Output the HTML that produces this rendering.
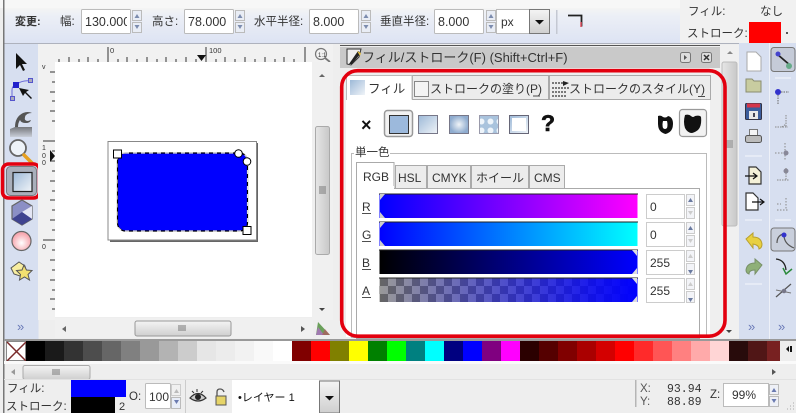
<!DOCTYPE html>
<html><head><meta charset="utf-8"><style>
html,body{margin:0;padding:0;background:#eee;width:796px;height:413px;overflow:hidden}
svg{display:block;filter:blur(.35px)}
text{font-family:"Liberation Sans","Noto Sans CJK JP",sans-serif;font-size:11.5px;fill:#333}
.m{font-family:"Liberation Mono",monospace;font-size:12px}
.in{fill:#fff;stroke:#bbb}
.u{stroke:#222;stroke-width:.8}
</style></head><body>
<svg width="796" height="413" viewBox="0 0 796 413" xmlns="http://www.w3.org/2000/svg">
<defs>
<linearGradient id="top" x1="0" y1="0" x2="0" y2="1"><stop offset="0" stop-color="#f4f4f4"/><stop offset=".2" stop-color="#eceff6"/><stop offset="1" stop-color="#dde3f3"/></linearGradient>
<linearGradient id="btn" x1="0" y1="0" x2="0" y2="1"><stop offset="0" stop-color="#f4f4f4"/><stop offset="1" stop-color="#cfcfcf"/></linearGradient>
<linearGradient id="th" x1="0" y1="0" x2="1" y2="0"><stop offset="0" stop-color="#e6e6e6"/><stop offset="1" stop-color="#c8c8c8"/></linearGradient>
<linearGradient id="sq" x1="0" y1="0" x2="1" y2="1"><stop offset="0" stop-color="#9db9d8"/><stop offset="1" stop-color="#f0f4f8"/></linearGradient>
<linearGradient id="wv" x1="0" y1="0" x2="0" y2="1"><stop offset="0" stop-color="#555"/><stop offset="1" stop-color="#c4c8d0"/></linearGradient>
<linearGradient id="rr" x1="0" y1="0" x2="1" y2="0"><stop offset="0" stop-color="#0000ff"/><stop offset="1" stop-color="#ff00ff"/></linearGradient>
<linearGradient id="gg" x1="0" y1="0" x2="1" y2="0"><stop offset="0" stop-color="#0000ff"/><stop offset="1" stop-color="#00ffff"/></linearGradient>
<linearGradient id="bb" x1="0" y1="0" x2="1" y2="0"><stop offset="0" stop-color="#000"/><stop offset="1" stop-color="#0000ff"/></linearGradient>
<linearGradient id="aa" x1="0" y1="0" x2="1" y2="0"><stop offset="0" stop-color="#0000ff" stop-opacity="0"/><stop offset="1" stop-color="#0000ff"/></linearGradient>
<radialGradient id="rad"><stop offset="0" stop-color="#f0f4f8"/><stop offset="1" stop-color="#8faccf"/></radialGradient>
<radialGradient id="ball" cx=".5" cy=".6"><stop offset="0" stop-color="#fff"/><stop offset="1" stop-color="#f7a8b0"/></radialGradient>
<pattern id="chk" width="16" height="16" patternUnits="userSpaceOnUse" x="380" y="278"><rect width="16" height="16" fill="#999"/><rect width="8" height="8" fill="#666"/><rect x="8" y="8" width="8" height="8" fill="#666"/></pattern>
<pattern id="dots" width="9" height="9" patternUnits="userSpaceOnUse"><rect width="9" height="9" fill="#a9c3dd"/><circle cx="4.5" cy="4.5" r="3" fill="#eef4fa"/></pattern>
</defs>

<rect width="796" height="413" fill="#eeeeee"/>
<!-- top bar -->
<rect x="0" y="0" width="796" height="8" fill="#f7f7f7"/>
<rect x="4" y="8" width="680" height="35" fill="url(#top)"/>
<rect x="4" y="43" width="735" height="1" fill="#aeb2bd"/>
<rect x="3" y="0" width="1.5" height="413" fill="#777"/>
<rect x="680" y="0" width="116" height="43" fill="#f1f1f1"/>

<text x="15" y="25" style="font-weight:bold;font-size:11px">変更:</text>
<text x="60" y="25">幅:</text>
<rect class="in" x="81.500" y="9.500" width="49" height="24" rx="1"/>
<text x="85" y="26" style="font-size:12.500px">130.000</text><rect x="127" y="10" width="3" height="23" fill="#fff"/>
<text x="152" y="25">高さ:</text>
<rect class="in" x="184.500" y="9.500" width="49" height="24" rx="1"/>
<text x="188" y="26" style="font-size:12.500px">78.000</text>
<text x="254" y="25">水平半径:</text>
<rect class="in" x="309.500" y="9.500" width="49" height="24" rx="1"/>
<text x="313" y="26" style="font-size:12.500px">8.000</text>
<text x="380" y="25">垂直半径:</text>
<rect class="in" x="434.500" y="9.500" width="49" height="24" rx="1"/>
<text x="438" y="26" style="font-size:12.500px">8.000</text>
<!-- spins -->
<g fill="#e9edf5" stroke="#bbb">
<rect x="132.500" y="10.500" width="9" height="10"/><rect x="132.500" y="22.500" width="9" height="10"/>
<rect x="235.500" y="10.500" width="9" height="10"/><rect x="235.500" y="22.500" width="9" height="10"/>
<rect x="361.500" y="10.500" width="9" height="10"/><rect x="361.500" y="22.500" width="9" height="10"/>
<rect x="486.500" y="10.500" width="9" height="10"/><rect x="486.500" y="22.500" width="9" height="10"/>
</g>
<g fill="#7c8cae">
<path d="M134.500 18l2.500-4 2.500 4zM134.500 25l2.500 4 2.500-4z"/>
<path d="M237.500 18l2.500-4 2.500 4zM237.500 25l2.500 4 2.500-4z"/>
<path d="M363.500 18l2.500-4 2.500 4zM363.500 25l2.500 4 2.500-4z"/>
<path d="M488.500 18l2.500-4 2.500 4zM488.500 25l2.500 4 2.500-4z"/>
</g>
<rect class="in" x="496.500" y="9.500" width="33" height="24"/>
<text x="501" y="26" style="font-size:12px">px</text>
<rect x="529.500" y="9.500" width="20" height="24" fill="url(#btn)" stroke="#777"/>
<path d="M535 20h9l-4.500 4.500z" fill="#111"/>
<rect x="556" y="10" width="1.500" height="24" fill="#c4c8d2"/>
<path d="M568 15.500h13.500v11" fill="none" stroke="#222" stroke-width="1.800"/>
<path d="M581 22v5" stroke="#e05060" stroke-width="1.500"/>

<text x="688" y="15" style="font-size:11.500px">フィル:</text>
<text x="760" y="15" style="font-size:11.500px">なし</text>
<text x="687" y="37" style="font-size:11.500px">ストローク:</text>
<rect x="749" y="22" width="32" height="21" fill="#ff0000"/>
<rect x="786" y="32" width="2" height="2" fill="#555"/>

<!-- left toolbar -->
<rect x="4.500" y="44" width="34" height="295" fill="#d7dff0"/>
<path d="M16 53v16l4-4 3 6 2-1-3-6h5z" fill="#111"/>
<path d="M12 98V90q0-4 4-5" fill="none" stroke="#6a6ad8"/>
<path d="M17 84q6-4 13-3" fill="none" stroke="#6a6ad8"/>
<rect x="13" y="82" width="6" height="6" fill="#2222cc"/>
<rect x="28.500" y="78.500" width="4" height="4" fill="#aab" stroke="#5555cc"/>
<rect x="10.500" y="96.500" width="4" height="4" fill="#aab" stroke="#5555cc"/>
<path d="M19 88l4 8 2-3 6 6 1-1-6-6 3-2z" fill="#111"/>
<path d="M10 137v-8l5-2h17v10z" fill="url(#wv)" opacity=".75"/>
<path d="M15 127q0-10 8-14 5-2 9 0-6 0-7 4t3 4l3-1q-1 3-5 3-5 0-6-3-2 3-2 7z" fill="#555"/>
<circle cx="18" cy="148" r="8" fill="#eef3f8" stroke="#666" stroke-width="1.800"/>
<path d="M24 155l8 8" stroke="#e6a020" stroke-width="3.500" stroke-linecap="round"/>
<rect x="6.500" y="166.500" width="30" height="29" rx="4" fill="#a9afbb" stroke="#77797f"/>
<rect x="13" y="172.500" width="19" height="19" fill="url(#sq)" stroke="#222" stroke-width="1.200"/>
<rect x="2.500" y="164" width="37" height="34" rx="6" fill="none" stroke="#e3000f" stroke-width="3.500"/>
<path d="M22 200l10 6v13l-10 6-10-6v-13z" fill="#8b8fc5" stroke="#666" stroke-width="1.200"/>
<path d="M22 212l10-6v13z" fill="#e4e6f4"/>
<path d="M22 212l10 7-10 6-10-6z" fill="#3f4390"/>
<circle cx="21.500" cy="241" r="9.500" fill="url(#ball)" stroke="#666" stroke-width="1.200"/>
<path d="M11 268l8-6 6 4 1 5-6 5-6-2z" fill="#f7eda0" stroke="#555"/>
<path d="M24 265l2.500 5 5.500.5-4 4 1.500 5.500-5-3-5 3 1-5.500-4-4 5.500-.5z" fill="#f2e070" stroke="#555"/>
<text x="17" y="331" style="font-size:13px;fill:#6a7ab8">»</text>

<!-- rulers -->
<rect x="38" y="44" width="295" height="18" fill="#f1f1f1"/>
<rect x="38" y="44" width="17" height="276" fill="#f1f1f1"/>
<path d="M59 62v-3M69 62v-5M79 62v-3M88 62v-5M98 62v-3M108 47v15M118 62v-3M127 62v-5M137 62v-3M147 62v-5M157 62v-3M166 62v-5M176 62v-3M186 62v-5M196 62v-3M206 47v15M216 62v-3M225 62v-5M235 62v-3M245 62v-5M255 62v-3M265 62v-5M275 62v-3M284 62v-5M294 62v-3M305 47v15" stroke="#333" fill="none"/>
<text x="110" y="53" style="font-size:7.500px">0</text>
<text x="209" y="53" style="font-size:7.500px">100</text>
<path d="M197 55h9l-4.500 6z" fill="#111"/>
<path d="M50 72h5M52 82h3M50 92h5M52 101h3M50 111h5M52 121h3M43 141h12M52 151h3M50 161h5M52 171h3M50 181h5M52 191h3M50 200h5M52 210h3M50 220h5M52 230h3M43 240h12M52 250h3M50 260h5M52 270h3M50 280h5M52 290h3M50 299h5M52 309h3" stroke="#333" fill="none"/>
<text x="42" y="69" style="font-size:7px">v</text>
<text x="42" y="150" style="font-size:7px">1</text><text x="42" y="158" style="font-size:7px">0</text><text x="42" y="165" style="font-size:7px">0</text>
<text x="42" y="249" style="font-size:7px">0</text>
<path d="M50 150v12l5-6z" fill="#111"/>
<!-- magnifier -->
<circle cx="321" cy="54" r="5.500" fill="#f2f2f2" stroke="#777" stroke-width="1.200"/>
<path d="M325 58l5 4" stroke="#777" stroke-width="1.800"/>
<text x="318" y="57" style="font-size:6px">1:1</text>

<!-- canvas -->
<rect x="55" y="62" width="257" height="255" fill="#fff"/>
<rect x="110" y="143" width="148" height="99" fill="#666"/>
<rect x="108" y="141.500" width="148.500" height="98.500" fill="#fff" stroke="#888"/>
<rect x="117.500" y="153" width="130" height="78" rx="8" fill="#0000ff" stroke="#000" stroke-width="1.200"/>
<rect x="117" y="153" width="130.500" height="78" rx="8" fill="none" stroke="#ddd" stroke-dasharray="4 4" stroke-width="1.200"/>
<rect x="113.500" y="150" width="8" height="8" fill="#fff" stroke="#000"/>
<rect x="243" y="226.500" width="8" height="8" fill="#fff" stroke="#000"/>
<circle cx="238.500" cy="153.500" r="3.800" fill="#fff" stroke="#000"/>
<circle cx="247" cy="161.500" r="3.800" fill="#fff" stroke="#000"/>

<!-- canvas scrollbars -->
<rect x="312" y="62" width="21" height="258" fill="#f0f0f0"/>
<path d="M319 77l3-3 3 3z" fill="#666"/>
<rect x="315.500" y="126.500" width="14" height="128" rx="2" fill="url(#th)" stroke="#aaa"/>
<path d="M319 187h7M319 189h7M319 191h7M319 193h7" stroke="#777"/>
<path d="M319 308l3 3 3-3z" fill="#444"/>
<rect x="55" y="318" width="258" height="20" fill="#f0f0f0"/>
<path d="M66 326v6l-4-3z" fill="#666"/>
<path d="M301 326v6l4-3z" fill="#555"/>
<rect x="135" y="321" width="96" height="15" rx="2" fill="url(#btn)" stroke="#999"/>
<path d="M179 325v6M181 325v6M183 325v6M185 325v6" stroke="#777"/>
<path d="M318 322l-2 13 14 0z" fill="#6aa05a"/>
<path d="M318 327l-2 8h8z" fill="#a07ab0"/>
<path d="M325 329l5 6h-8z" fill="#c04a60" opacity=".6"/>

<!-- panel -->
<rect x="340" y="45" width="380" height="23" fill="#c9c9c9"/>
<rect x="340" y="45" width="380" height="1" fill="#555"/>
<rect x="340" y="46" width="380" height="1" fill="#eee"/>
<rect x="340" y="68" width="398" height="270" fill="#efefef"/>
<path d="M347 49h14l-2 8-8 8-4-1 0-4z" fill="#eee" stroke="#333"/>
<path d="M349 64l9-13 3 2-9 11z" fill="#222"/>
<path d="M357 51l4 2-1 3z" fill="#e6c040"/>
<text x="362" y="62" style="font-size:13px">フィル/ストローク(F) (Shift+Ctrl+F)</text>
<rect x="680.500" y="52.500" width="10" height="10" rx="2" fill="#ddd" stroke="#777"/>
<path d="M684 55v5l3-2.500z" fill="#555"/>
<rect x="701.500" y="52.500" width="10" height="10" rx="2" fill="#ddd" stroke="#777"/>
<path d="M704 55l5 5M709 55l-5 5" stroke="#333" stroke-width="1.500"/>

<!-- tabs -->
<rect x="346" y="99" width="364" height="238" fill="#fff"/>
<rect x="412.500" y="75.500" width="136" height="24" fill="#ececec" stroke="#aaa"/>
<rect x="549.500" y="75.500" width="161" height="24" fill="#ececec" stroke="#aaa"/>
<rect x="346" y="75" width="66" height="25" fill="#fff"/>
<path d="M346 99.500h.5V75.500h65.500v24" fill="#fff" stroke="#bbb"/>
<rect x="350" y="80" width="15" height="15" fill="url(#sq)"/>
<text x="368" y="93" style="font-size:12.500px">フィル</text>
<rect x="414.500" y="81.500" width="14" height="15" fill="#f4f4f4" stroke="#888"/>
<text x="430" y="93" style="font-size:12px">ストロークの塗り(P)</text>
<path d="M533 96h7" class="u"/>
<path d="M552 83h13M552 88h17M552 92h14M552 96h15" stroke="#333" stroke-width="1.300" stroke-dasharray="2 1"/>
<path d="M563 81l6 2-6 3z" fill="#222"/>
<text x="569" y="93" style="font-size:12px">ストロークのスタイル(Y)</text>
<path d="M698 96.500h7" class="u"/>

<!-- fill icons -->
<text x="361" y="131" style="font-size:18px;font-weight:bold;fill:#111">×</text>
<rect x="384.500" y="110.500" width="28" height="26" rx="3" fill="#f2f2f2" stroke="#999" stroke-width="1.500"/>
<rect x="389.500" y="115.500" width="19" height="18" fill="#9cb9dc" stroke="#333"/>
<rect x="418.500" y="115.500" width="19" height="18" fill="url(#sq)" stroke="#778"/>
<rect x="449.500" y="115.500" width="19" height="18" fill="url(#rad)" stroke="#778"/>
<rect x="479.500" y="115.500" width="19" height="18" fill="url(#dots)" stroke="#99a"/>
<rect x="509.500" y="115.500" width="19" height="18" fill="url(#sq)" stroke="#667"/>
<rect x="512" y="118" width="14" height="13" fill="#fff"/>
<text x="541" y="131" style="font-size:23px;font-weight:bold;fill:#111;stroke:#111;stroke-width:.6">?</text>
<path d="M658 116q3-1 5 1 2 1 4 0l1-1q5 1 5 8 0 8-7.500 10-7.500-2-7.500-10 0-5 0-8z" fill="#111"/>
<path d="M663 121q-1 4 0 7 2 2 4 0 1-3 0-7z" fill="#fff"/>
<rect x="679.500" y="109.500" width="27" height="27" rx="3" fill="#f2f2f2" stroke="#999" stroke-width="1.200"/>
<path d="M685 115q4-1 6 1 2 2 4 0 5-1 6 1 1 9-3 13-4 3-7 3-4-1-6-5-2-6 0-13z" fill="#111"/>

<!-- group -->
<rect x="351.500" y="153.500" width="355" height="184" fill="none" stroke="#bbb"/>
<rect x="354" y="146" width="36" height="14" fill="#fff"/>
<text x="355" y="156" style="font-size:11.500px">単一色</text>

<!-- notebook -->
<rect x="356.500" y="188.500" width="343" height="150" fill="#fff" stroke="#aaa"/>
<rect x="395.500" y="165.500" width="31" height="23" fill="#ececec" stroke="#aaa"/>
<rect x="427.500" y="165.500" width="43" height="23" fill="#ececec" stroke="#aaa"/>
<rect x="471.500" y="165.500" width="57" height="23" fill="#ececec" stroke="#aaa"/>
<rect x="529.500" y="165.500" width="35" height="23" fill="#ececec" stroke="#aaa"/>
<path d="M356.500 189v-26.500h37.500V189" fill="#fff" stroke="#aaa"/>
<rect x="357" y="186" width="37" height="4" fill="#fff"/>
<text x="363" y="181" style="font-size:12px">RGB</text>
<text x="398" y="182" style="font-size:12px">HSL</text>
<text x="432" y="182" style="font-size:12px">CMYK</text>
<text x="476" y="182" style="font-size:12px">ホイール</text>
<text x="534" y="182" style="font-size:12px">CMS</text>

<!-- sliders -->
<text x="362" y="211" style="font-size:12px">R</text><path d="M362 213.500h9" class="u"/>
<text x="362" y="239" style="font-size:12px">G</text><path d="M362 241.500h9" class="u"/>
<text x="362" y="267" style="font-size:12px">B</text><path d="M362 269.500h9" class="u"/>
<text x="362" y="295" style="font-size:12px">A</text><path d="M362 297.500h9" class="u"/>
<rect x="379.500" y="194" width="258" height="24" fill="url(#rr)"/>
<rect x="379.500" y="222" width="258" height="24" fill="url(#gg)"/>
<rect x="379.500" y="250" width="258" height="24" fill="url(#bb)"/>
<rect x="379.500" y="278" width="258" height="24" fill="url(#chk)"/>
<rect x="379.500" y="278" width="258" height="24" fill="url(#aa)"/>
<path d="M379 194h259M379 222h259M379 250h259M379 278h259" stroke="#222" stroke-width="1"/>
<path d="M380 194v6l5-6zM380 218v-6l5 6zM380 222v6l5-6zM380 246v-6l5 6z" fill="#ccc"/>
<path d="M637 250v6l-5-6zM637 274v-6l-5 6zM637 278v6l-5-6zM637 302v-6l-5 6z" fill="#ddd"/>
<g fill="#fff" stroke="#ccc">
<rect x="646.500" y="194.500" width="38" height="24"/><rect x="646.500" y="222.500" width="38" height="24"/>
<rect x="646.500" y="250.500" width="38" height="24"/><rect x="646.500" y="278.500" width="38" height="24"/>
</g>
<text x="650" y="211" style="font-size:12px">0</text>
<text x="650" y="239" style="font-size:12px">0</text>
<text x="650" y="267" style="font-size:12px">255</text>
<text x="650" y="295" style="font-size:12px">255</text>
<g fill="#f3f4f8" stroke="#ccc">
<rect x="686.500" y="194.500" width="8" height="11"/><rect x="686.500" y="207.500" width="8" height="11"/>
<rect x="686.500" y="222.500" width="8" height="11"/><rect x="686.500" y="235.500" width="8" height="11"/>
<rect x="686.500" y="250.500" width="8" height="11"/><rect x="686.500" y="263.500" width="8" height="11"/>
<rect x="686.500" y="278.500" width="8" height="11"/><rect x="686.500" y="291.500" width="8" height="11"/>
</g>
<path d="M688 202l2.500-4 2.500 4zM688 230l2.500-4 2.500 4zM688 270l2.500 4 2.500-4zM688 298l2.500 4 2.500-4z" fill="#6a7aa0"/>
<path d="M688 211l2.500 4 2.500-4zM688 239l2.500 4 2.500-4zM688 258l2.500-4 2.500 4zM688 286l2.500-4 2.500 4z" fill="#ccc"/>

<!-- panel scrollbar -->
<rect x="720" y="45" width="19" height="293" fill="#f0f0f0"/>
<path d="M727 54l3-3 3 3z" fill="#888"/>
<rect x="722" y="62" width="15" height="164" rx="2" fill="url(#th)" stroke="#bbb"/>
<path d="M726 141h7M726 143h7M726 145h7M726 147h7" stroke="#888"/>
<path d="M726 330l3 3 3-3z" fill="#444"/>

<!-- red highlight -->
<rect x="341.700" y="70.700" width="383.300" height="265.500" rx="16" fill="none" stroke="#e3000f" stroke-width="3.600"/>

<!-- right toolbars -->
<rect x="739" y="43" width="57" height="296" fill="#d7dff0"/>
<rect x="769" y="43" width="1" height="296" fill="#eef1f8"/>
<path d="M747 52h9l5 5v14h-14z" fill="#fff" stroke="#aaa"/>
<path d="M746 79h6l2 2h7v11h-15z" fill="#c8cca0" stroke="#8a8d70"/>
<rect x="745.500" y="103.500" width="16" height="16" rx="1" fill="#3c5d9c" stroke="#334"/>
<rect x="747" y="103.500" width="13" height="4" fill="#d5354a"/>
<rect x="749" y="111" width="9" height="8" fill="#e8e8e8"/>
<rect x="753" y="113" width="2" height="4" fill="#445"/>
<rect x="749.500" y="129.500" width="8" height="6" fill="#f4f4f4" stroke="#777"/>
<rect x="745.500" y="135.500" width="16" height="7" rx="2" fill="#bbb" stroke="#555"/>
<path d="M745 156h17M745 220h17M745 284h17M775 78h16M775 220h16" stroke="#f5f7fb"/>
<path d="M749 167h7l5 5v12h-12z" fill="#f4f1d8" stroke="#333" stroke-width="1.200"/>
<path d="M745 176h11M753 173l4 3-4 3" fill="none" stroke="#111" stroke-width="1.200"/>
<path d="M746 193h7l5 5v12h-12z" fill="#fff" stroke="#333" stroke-width="1.200"/>
<path d="M752 202h11M760 199l4 3-4 3" fill="none" stroke="#111" stroke-width="1.200"/>
<path d="M746 239l7-6v4q8 0 9 7 0 4-3 5 0-4-6-5v4z" fill="#e8d040" stroke="#b8a030"/>
<path d="M762 265l-7-6v4q-8 0-9 7 0 3 3 4 0-4 6-4v4z" fill="#8fb078" stroke="#789068"/>
<text x="748" y="331" style="font-size:13px;fill:#6a7ab8">»</text>
<text x="778" y="331" style="font-size:13px;fill:#6a7ab8">»</text>

<rect x="771" y="47.500" width="24" height="24" rx="3" fill="#c5cbd8" stroke="#777"/>
<path d="M777 54l14 12" stroke="#222" stroke-width="1.800"/>
<circle cx="778" cy="54" r="2.500" fill="#4444cc"/><circle cx="789" cy="66" r="3" fill="#66aa88"/>
<circle cx="778" cy="92" r="3" fill="#3333cc"/>
<path d="M781 92h8" stroke="#666" stroke-dasharray="1.500 1"/><path d="M778 95v9" stroke="#666" stroke-dasharray="1.500 1"/>
<path d="M775 127h13M786 115v12M782 127l4-3" stroke="#888" stroke-dasharray="1.500 1"/>
<path d="M775 153h14M785 143v18" stroke="#888" stroke-dasharray="1.500 1.500"/>
<circle cx="786" cy="153" r="2.500" fill="#889"/>
<circle cx="786" cy="171" r="2.500" fill="#889"/>
<path d="M777 180h12M786 168v12" stroke="#888" stroke-dasharray="1.500 1"/>
<path d="M777 204h4M777 210h12M786 198v12" stroke="#888" stroke-dasharray="1.500 1.500"/>
<rect x="771" y="228" width="24" height="23" rx="3" fill="#c9cfdc" stroke="#777"/>
<path d="M777 243q0-7 6-9M784 235q0 9 10 13" fill="none" stroke="#555" stroke-width="1.200"/>
<circle cx="784" cy="235" r="2.500" fill="#3333cc"/>
<path d="M776 259q9 1 10 11" fill="none" stroke="#222" stroke-width="1.300"/>
<path d="M783 268l3 6 6-5" fill="none" stroke="#2a8a3a" stroke-width="1.500"/>
<path d="M776 297l15-13" stroke="#555" stroke-width="1.200"/>
<path d="M776 290l15 3" stroke="#777"/>
<circle cx="784" cy="291" r="2.300" fill="#778"/>

<!-- palette -->
<rect x="4" y="339" width="792" height="2" fill="#999"/>
<rect x="6.500" y="341.500" width="19" height="19" fill="#fff" stroke="#888"/>
<path d="M7 342l19 19M26 342l-19 19" stroke="#7a2a2a" stroke-width="1.500"/>
<g shape-rendering="crispEdges">
<rect x="26" y="341" width="19" height="20" fill="#000"/>
<rect x="45" y="341" width="19" height="20" fill="#1a1a1a"/>
<rect x="64" y="341" width="19" height="20" fill="#333"/>
<rect x="83" y="341" width="19" height="20" fill="#4d4d4d"/>
<rect x="102" y="341" width="19" height="20" fill="#666"/>
<rect x="121" y="341" width="19" height="20" fill="#808080"/>
<rect x="140" y="341" width="19" height="20" fill="#999"/>
<rect x="159" y="341" width="19" height="20" fill="#b3b3b3"/>
<rect x="178" y="341" width="19" height="20" fill="#ccc"/>
<rect x="197" y="341" width="19" height="20" fill="#e6e6e6"/>
<rect x="216" y="341" width="19" height="20" fill="#ececec"/>
<rect x="235" y="341" width="19" height="20" fill="#f2f2f2"/>
<rect x="254" y="341" width="19" height="20" fill="#f9f9f9"/>
<rect x="273" y="341" width="19" height="20" fill="#fff"/>
<rect x="292" y="341" width="19" height="20" fill="#800000"/>
<rect x="311" y="341" width="19" height="20" fill="#f00"/>
<rect x="330" y="341" width="19" height="20" fill="#808000"/>
<rect x="349" y="341" width="19" height="20" fill="#ff0"/>
<rect x="368" y="341" width="19" height="20" fill="#008000"/>
<rect x="387" y="341" width="19" height="20" fill="#0f0"/>
<rect x="406" y="341" width="19" height="20" fill="#008080"/>
<rect x="425" y="341" width="19" height="20" fill="#0ff"/>
<rect x="444" y="341" width="19" height="20" fill="#000080"/>
<rect x="463" y="341" width="19" height="20" fill="#00f"/>
<rect x="482" y="341" width="19" height="20" fill="#800080"/>
<rect x="501" y="341" width="19" height="20" fill="#f0f"/>
<rect x="520" y="341" width="19" height="20" fill="#2b0000"/>
<rect x="539" y="341" width="19" height="20" fill="#500"/>
<rect x="558" y="341" width="19" height="20" fill="#800000"/>
<rect x="577" y="341" width="19" height="20" fill="#a00"/>
<rect x="596" y="341" width="19" height="20" fill="#d40000"/>
<rect x="615" y="341" width="19" height="20" fill="#f00"/>
<rect x="634" y="341" width="19" height="20" fill="#ff2a2a"/>
<rect x="653" y="341" width="19" height="20" fill="#f55"/>
<rect x="672" y="341" width="19" height="20" fill="#ff8080"/>
<rect x="691" y="341" width="19" height="20" fill="#faa"/>
<rect x="710" y="341" width="19" height="20" fill="#ffd5d5"/>
<rect x="729" y="341" width="19" height="20" fill="#280b0b"/>
<rect x="748" y="341" width="19" height="20" fill="#501616"/>
<rect x="767" y="341" width="13" height="20" fill="#782121"/>
</g>
<path d="M789 346v6l-3-3zM790 346h2v6h-2z" fill="#111"/>
<rect x="4" y="361" width="792" height="3" fill="#fafafa"/>
<path d="M15 369v6l-4-3z" fill="#999"/>
<rect x="23" y="365.500" width="67" height="14" rx="2" fill="url(#btn)" stroke="#aaa"/>
<path d="M53 369v6M55 369v6M57 369v6M59 369v6" stroke="#777"/>
<path d="M772 369v6l4-3z" fill="#555"/>
<rect x="4" y="379" width="792" height="1" fill="#e2e2e2"/>

<!-- status -->
<text x="7" y="392" style="font-size:11.500px">フィル:</text>
<text x="6" y="410" style="font-size:11.500px">ストローク:</text>
<rect x="71" y="380" width="55" height="17" fill="#0000ff"/>
<rect x="71" y="397" width="44" height="16" fill="#000"/>
<text x="119" y="410" style="font-size:11px">2</text>
<text x="129" y="400" style="font-size:11.500px">O:</text>
<rect class="in" x="145.500" y="383.500" width="25" height="25" rx="1"/>
<text x="149" y="401" style="font-size:12px">100</text>
<rect x="171.500" y="384.500" width="9" height="11" fill="#f0f0f0" stroke="#ccc"/>
<rect x="171.500" y="397.500" width="9" height="11" fill="#e8edf8" stroke="#bbb"/>
<path d="M174 393l2.500-4 2.500 4z" fill="#bbb"/><path d="M174 400l2.500 4 2.500-4z" fill="#6a7ab0"/>
<rect x="185" y="380" width="1" height="33" fill="#ccc"/>
<path d="M190 398q8-9 16 0-8 6-16 0z" fill="#ccc" stroke="#333" stroke-width="1.200"/>
<circle cx="198" cy="397" r="3" fill="#222"/>
<path d="M192 391l2 2M197 389v3M203 391l-2 2" stroke="#333"/>
<path d="M217 396v-4q0-3 3-3 3 0 4 3" fill="none" stroke="#555" stroke-width="1.300"/>
<rect x="216" y="396" width="10" height="9" fill="#e6d468" stroke="#555"/>
<rect x="232" y="380" width="87" height="33" fill="#fff"/>
<text x="238" y="401" style="font-size:11px;fill:#111">•レイヤー 1</text>
<rect x="319.500" y="381" width="20" height="32" fill="url(#btn)" stroke="#777"/>
<path d="M325 396h9l-4.500 4.500z" fill="#111"/>
<rect x="635" y="380" width="1.500" height="27" fill="#b5b5b5"/>
<text x="640" y="392" style="font-size:11.500px;fill:#555">X:</text>
<text x="640" y="405" style="font-size:11.500px;fill:#555">Y:</text>
<text class="m" x="667" y="392" style="font-size:11.500px">93.94</text>
<text class="m" x="667" y="405" style="font-size:11.500px">88.89</text>
<text x="710" y="398" style="font-size:11.500px">Z:</text>
<rect class="in" x="723.500" y="383.500" width="45" height="23"/>
<text x="732" y="399" style="font-size:12px">99%</text>
<rect x="769.500" y="384.500" width="9" height="10" fill="#eef0f6" stroke="#bbb"/>
<rect x="769.500" y="396.500" width="9" height="10" fill="#eef0f6" stroke="#bbb"/>
<path d="M771.500 392l2.500-4 2.500 4zM771.500 399l2.500 4 2.500-4z" fill="#6a7ab0"/>
<path d="M787 409h1M790 409h1M793 409h1M790 406h1M793 406h1M793 403h1" stroke="#aaa"/>
</svg>
</body></html>
